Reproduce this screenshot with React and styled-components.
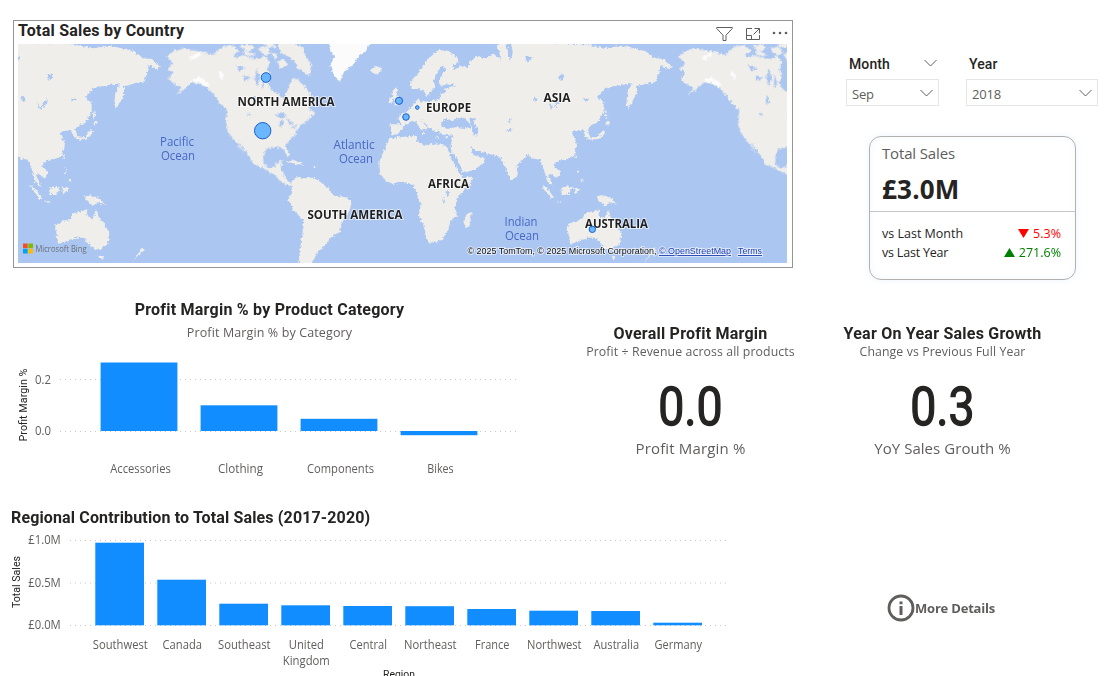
import React from 'react';
import styled, { createGlobalStyle } from 'styled-components';

const SANS = '"Open Sans", "Noto Sans", sans-serif';
const DIN = 'Roboto, "Liberation Sans", sans-serif';

const GlobalStyle = createGlobalStyle`
  * { box-sizing: border-box; }
  body { margin: 0; background: #fff; font-family: ${SANS}; color: #252423; overflow: hidden; }
  svg { display: block; }
`;

const Page = styled.main`
  width: 1118px;
  height: 676px;
  overflow: hidden;
  display: flex;
  flex-direction: column;
  background: #fff;
`;
const Row = styled.section`
  display: flex;
  flex: none;
  height: ${(p) => p.$height}px;
  padding-left: ${(p) => p.$left || 0}px;
`;

/* Map visual */
const MapCard = styled.article`
  width: 780px;
  height: 248px;
  margin: 20px 0 0 13px;
  padding: 0 4px;
  border: 1px solid #979593;
  flex: none;
`;
const MapHeader = styled.header`
  height: 23px;
  display: flex;
  justify-content: space-between;
`;
const HeaderTools = styled.div`
  display: flex;
  align-items: center;
  padding-top: 3px;
  margin-right: -1px;
  gap: 11.5px;
`;
const Title = styled.h2`
  margin: 0;
  font: 700 16px/20px ${DIN};
  letter-spacing: ${(p) => p.$track ?? 0.23}px;
  white-space: nowrap;
  text-align: ${(p) => p.$align || 'left'};
`;
const Subtitle = styled.p`
  margin: ${(p) => p.$lift || 0}px 0 0;
  font: 400 ${(p) => p.$size || 12}px/${(p) => p.$line || 16}px ${SANS};
  letter-spacing: ${(p) => p.$track || 0}px;
  color: #605e5c;
  text-align: center;
  white-space: nowrap;
`;

/* Filters and summary */
const Side = styled.aside`
  padding: 55px 0 0 53px;
  width: 325px;
`;
const Filters = styled.div`
  display: flex;
  gap: 27px;
`;
const Slicer = styled.div`
  width: ${(p) => p.$width}px;
`;
const SlicerHead = styled.div`
  display: flex;
  justify-content: space-between;
  height: 24px;
  padding: 0 2px 0 3px;
  font: 500 14px/19px ${DIN};
  letter-spacing: 0.1px;
`;
const Select = styled.div`
  height: 27px;
  border: 1px solid #e6e6e6;
  display: flex;
  align-items: center;
  justify-content: space-between;
  padding: 2px 5px 0;
  font-size: 13px;
  line-height: 24px;
  letter-spacing: -0.2px;
  color: #605e5c;
`;
const Summary = styled.article`
  width: 207px;
  height: 144px;
  margin: 30px 0 0 23px;
  border: 1px solid #b3b0ad;
  border-radius: 12px;
  box-shadow: 0 0 10px #eef5ff, inset 0 0 9px #f3f8ff;
`;
const SummaryTop = styled.div`
  height: 75px;
  padding: 6px 12px 0;
  border-bottom: 1px solid #c8c6c4;
`;
const SummaryLabel = styled.div`
  font-size: 15px;
  line-height: 20px;
  letter-spacing: -0.15px;
  color: #605e5c;
`;
const SummaryValue = styled.div`
  margin-top: 13px;
  font-size: 26px;
  font-weight: 700;
  line-height: 26px;
  letter-spacing: 0.2px;
`;
const Compare = styled.div`
  padding: 12px 14px 0 12px;
`;
const CompareRow = styled.div`
  display: flex;
  justify-content: space-between;
  font-size: 12.5px;
  line-height: 19px;
  letter-spacing: ${(p) => p.$track}px;
`;
const Delta = styled.span`
  display: flex;
  align-items: center;
  gap: 4px;
  letter-spacing: 0;
  color: ${(p) => (p.$up ? '#008000' : '#ff0000')};
`;

/* Charts and figures */
const CategoryPanel = styled.article`
  width: 529px;
  padding-top: 31px;
`;
const ChartHeading = styled.header`
  width: 517px;
  height: 51px;
  padding-top: 1px;
`;
const Kpi = styled.article`
  width: ${(p) => p.$width}px;
  padding-top: 56px;
  display: flex;
  flex-direction: column;
  align-items: center;
`;
const KpiValue = styled.div`
  font: 400 54px/60px ${DIN};
  margin-top: 17px;
  transform: scaleX(0.86);
  -webkit-text-stroke: 1.3px #252423;
`;
const RegionPanel = styled.article`
  width: 740px;
`;
const Details = styled.a`
  display: flex;
  align-items: center;
  height: 28px;
  margin: 86px 0 0 136px;
  color: #605e5c;
  font: 700 13px/20px ${SANS};
  letter-spacing: -0.2px;
`;

const Chevron = ({ w = 13 }) => (
  <svg width={w} height="18" viewBox={`0 0 ${w} 18`} fill="none" stroke="#605e5c">
    <path d={`M.5 5 L${w / 2} 11 L${w - 0.5} 5`} />
  </svg>
);

const FitLabel = ({ x, y, w, children, size = 12, fill = '#605e5c', anchor = 'middle', font = SANS, weight = 400, ...rest }) => (
  <text x={x} y={y} textLength={w} lengthAdjust="spacingAndGlyphs" fontFamily={font} fontSize={size} fontWeight={weight} fill={fill} textAnchor={anchor} {...rest}>
    {children}
  </text>
);

const EURASIA = `M358 328 L395 328 385 310 392 298 410 290 425 275 438 258 446 250 452 260 480 258 508 252 512 236 528 234 524 222 560 210 545 206 512 212 506 198 520 175 528 162 515 152 500 175 490 195 495 212 482 230 470 244 462 225 445 222 425 222 420 200 440 180 460 150 480 125 510 105 540 110 562 128 565 145 548 148 552 165 575 150 590 160 600 140 615 125 650 130 670 118 690 128 695 150 688 110 682 88 708 82 720 140 728 110 722 80
 L946 88 1006 100 1056 92 1126 108 1156 130 1182 132 1206 155 1196 163 1172 150 1168 175 1156 200 1126 208 1098 213 1100 235 1076 280 1068 270 1072 235 1086 205 1056 210 1006 218 981 250 1001 260 1001 290 981 325 961 330 951 345 963 370 948 366 938 345 906 350 921 390 911 425 861 440 851 452 871 470 862 490 838 475 834 480 850 515 834 505 822 465 812 435 786 430 774 416 740 455 743 480 725 500 705 455 690 425 650 415 618 408 600 394 612 420 645 432 640 445 610 465 577 475 552 430 542 400 548 362 512 358 508 345 498 350 484 345 465 325 450 312 474 340 455 348 438 320 425 318 405 330 388 352 365 362Z`;
const AFRICA = `M358 372 L400 365 440 362 442 380 465 390 500 385 530 395 545 430 565 470 577 487 608 485 600 510 565 545 555 575 562 600 540 620 535 645 515 675 480 686 470 670 460 630 445 600 452 570 440 535 430 510 400 500 370 508 350 500 330 475 328 440 345 400Z M605 590 L600 630 588 640 580 620 588 600Z`;
const SOUTH_AMERICA = `M65 495 L85 485 105 490 130 488 150 500 175 520 190 540 230 548 246 565 235 595 215 620 210 650 185 665 165 690 150 705 130 735 118 760 85 760 90 700 98 650 100 615 70 585 53 552 66 535Z`;
const NORTH_AMERICA = `M470 125 L490 108 520 100 545 106 580 110 610 122 635 108 655 114 680 126 700 120 720 128 745 132 765 122 780 142 772 165 780 178 772 205 785 226 808 238 822 252 830 230 838 215 846 190 862 192 880 210 895 225 905 245 916 262 895 280 915 292 900 310 880 326 865 340 855 360 837 375 827 395 840 420 832 423 820 400 795 397 770 400 760 420 760 445 775 460 795 453 802 440 818 437 811 460 820 475 827 490 840 505 857 508 850 514 830 510 812 498 795 480 760 460 730 447 718 425 700 400 684 375 698 408 704 420 688 395 668 370 652 345 648 310 652 285 630 265 612 240 592 218 570 207 545 202 520 225 495 242 516 218 490 205 474 190 490 172 472 162 490 145Z`;
const ARCTIC = `M605 120 L640 95 665 90 690 108 665 122 640 112Z M690 92 L720 88 735 98 712 112Z M745 100 L770 95 785 115 762 120Z M800 82 L850 82 878 98 885 120 905 150 898 185 880 170 862 160 855 140 835 125 815 115Z M760 82 L790 84 800 98 775 96Z M800 140 L822 132 835 150 812 160Z M700 108 L722 112 738 120 722 124 702 118Z M786 118 L796 112 802 126 792 134Z`;
const GREENLAND = `M175 60 L180 105 195 125 180 150 192 185 210 200 222 170 250 150 265 125 290 105 300 85 290 60Z`;
const SMALL_ISLANDS = `M303 163 L318 153 336 160 334 170 318 178 304 172Z M375 275 L390 268 388 250 378 235 384 220 370 222 366 240 372 252Z M355 265 L368 262 370 248 360 246Z M48 440 L70 436 105 450 85 448Z M130 452 L145 456 132 460Z M457 350 L465 352 460 360Z M525 367 L538 366 532 371Z M495 364 L510 368 498 370Z`;
const OCEANIA = `M135 632 L155 620 178 612 190 595 210 590 232 583 230 602 248 610 258 582 268 608 285 630 298 655 294 685 272 704 250 702 232 680 222 668 200 668 175 676 145 688 140 660Z
 M268 722 L282 724 275 735Z M395 698 L405 705 385 720 365 745 385 715Z M222 545 L240 540 270 550 285 570 262 562 250 572 232 560Z M118 520 L135 512 150 518 140 540 118 540Z M60 510 L75 520 98 550 90 552 65 522Z M100 556 L125 560 112 563Z M155 515 L175 522 160 538Z M165 455 L170 470 165 478Z M178 490 L185 498 176 502Z M160 420 L166 425 161 433Z M190 370 L225 366 242 345 250 350 235 370 210 374Z M250 320 L265 322 252 332Z M252 285 L256 300 250 312 248 300Z`;
const LAKES = `M575 305 L592 318 608 335 590 340 560 336 530 342 512 330 525 310 545 318Z M598 312 L615 308 612 325 625 345 622 362 608 358 606 338Z M535 398 L560 430 578 468 570 470 545 432Z M525 530 L540 528 534 545Z M520 545 L526 565 520 566Z M706 345 L728 340 722 350Z M715 315 L722 312 718 326Z M770 122 L788 128 775 142 765 135Z M866 176 L884 180 876 198 868 190Z M794 242 L803 256 795 262 790 250Z M838 262 L848 278 866 252 872 256 858 276 842 284Z M940 250 L960 252 943 258Z`;
const NA_LAKES = `M794 300 L815 292 832 305 815 310Z M812 315 L820 318 815 340 808 330Z M830 310 L848 322 840 332Z M840 340 L862 328 856 338Z M715 292 L722 298 714 304Z M735 240 L742 262 734 270 730 250Z M700 180 L722 188 705 198Z M678 150 L705 158 688 168Z M740 160 L750 188 742 215 732 188Z M757 178 L765 205 756 220Z`;

function World({ id }) {
  return (
    <g id={id}>
      <g transform="translate(780 0)" fill="#efeeea">
        <path d={EURASIA} /><path d={AFRICA} /><path d={SOUTH_AMERICA} />
        <path d={SMALL_ISLANDS} /><path d={GREENLAND} fill="#fbfbfb" />
        <path d={LAKES} fill="#abc6f1" />
      </g>
      <path d={NORTH_AMERICA} fill="#efeeea" />
      <path d={ARCTIC} fill="#efeeea" />
      <path d={OCEANIA} fill="#efeeea" transform="translate(1536 0)" />
      <path d="M535 130 L570 110 568 124 548 134Z M540 200 L568 185 600 210 590 215 568 202Z M628 165 L642 180 638 195 628 185Z" fill="#fdfdfd" />
    </g>
  );
}

const OCEAN = '#4868c4';
const halo = { paintOrder: 'stroke', stroke: '#ffffff', strokeOpacity: 0.6, strokeWidth: 2 };

function MapView() {
  const place = { size: 12, fill: '#1f1f1f', weight: 700, ...halo };
  const ocean = { size: 12, fill: OCEAN };
  const credit = { size: 9, fill: '#111', font: '"Liberation Sans", sans-serif', anchor: 'start', ...halo };
  return (
    <svg width="769" height="219" viewBox="18 44 769 219">
      <defs>
        <filter id="coast" filterUnits="userSpaceOnUse" x="0" y="60" width="2500" height="720">
          <feTurbulence type="fractalNoise" baseFrequency="0.13" numOctaves="2" seed="4" result="n" />
          <feDisplacementMap in="SourceGraphic" in2="n" scale="14" xChannelSelector="R" yChannelSelector="G" />
        </filter>
      </defs>
      <rect x="18" y="44" width="769" height="219" fill="#abc6f1" />
      <g transform="translate(10 15) scale(.33333)" filter="url(#coast)">
        <World id="world" />
        <use href="#world" x="-1536" />
        <use href="#world" x="1536" />
        <path d={NA_LAKES} fill="#abc6f1" />
        <path d={NA_LAKES} fill="#abc6f1" transform="translate(1536 0)" />
      </g>
      <FitLabel x="286" y="106" w="97" {...place}>NORTH AMERICA</FitLabel>
      <FitLabel x="355" y="219" w="95" {...place}>SOUTH AMERICA</FitLabel>
      <FitLabel x="448.500" y="187.500" w="41" {...place}>AFRICA</FitLabel>
      <FitLabel x="448.500" y="112" w="45" {...place}>EUROPE</FitLabel>
      <FitLabel x="557" y="102" w="27" {...place}>ASIA</FitLabel>
      <FitLabel x="616.500" y="228" w="63" {...place}>AUSTRALIA</FitLabel>
      <FitLabel x="177" y="146" w="34" {...ocean}>Pacific</FitLabel>
      <FitLabel x="178" y="160" w="34" {...ocean}>Ocean</FitLabel>
      <FitLabel x="354" y="149" w="41" {...ocean}>Atlantic</FitLabel>
      <FitLabel x="356" y="163" w="34" {...ocean}>Ocean</FitLabel>
      <FitLabel x="521" y="225.500" w="33" {...ocean}>Indian</FitLabel>
      <FitLabel x="522" y="239.500" w="34" {...ocean}>Ocean</FitLabel>
      <g fill="#5bb0ff" fillOpacity=".9" stroke="#1a5fd0">
        <circle cx="266" cy="77.500" r="4.800" />
        <circle cx="262.700" cy="130.700" r="8.200" />
        <circle cx="399" cy="100.800" r="3.600" />
        <circle cx="406" cy="117" r="3.300" />
        <circle cx="417.300" cy="107.500" r="1.800" />
        <circle cx="592.300" cy="229.300" r="3.200" />
      </g>
      <path d="M23 243.500h4.700v4.700H23z" fill="#f25022" />
      <path d="M28.300 243.500H33v4.700h-4.700z" fill="#7fba00" />
      <path d="M23 248.800h4.700v4.700H23z" fill="#00a4ef" />
      <path d="M28.300 248.800H33v4.700h-4.700z" fill="#ffb900" />
      <FitLabel x="35.500" y="251.500" w="51" size={9} anchor="start" fill="#6b6f76">Microsoft Bing</FitLabel>
      <FitLabel x="467.500" y="254" w="189" {...credit}>© 2025 TomTom, © 2025 Microsoft Corporation,</FitLabel>
      <FitLabel x="659" y="254" w="72" {...credit} fill="#1f3fb0" textDecoration="underline">© OpenStreetMap</FitLabel>
      <FitLabel x="738" y="254" w="24" {...credit} fill="#1f3fb0" textDecoration="underline">Terms</FitLabel>
    </svg>
  );
}

function GridLines({ ys, x1, x2 }) {
  return ys.map((y) => <line key={y} x1={x1} x2={x2} y1={y} y2={y} stroke="#c8c8c8" strokeDasharray="1 4" />);
}

const categories = [
  { name: 'Accessories', w: 60.5, top: 362.5, h: 68.5 },
  { name: 'Clothing', w: 45, top: 405.3, h: 25.7 },
  { name: 'Components', w: 67, top: 418.8, h: 12.2 },
  { name: 'Bikes', w: 26.5, top: 431, h: 4.2 },
];

function CategoryChart() {
  return (
    <svg width="520" height="140" viewBox="11 350 520 140">
      <GridLines ys={[379.5, 431.5]} x1={60} x2={520} />
      {categories.map((c, i) => (
        <g key={c.name}>
          <rect x={100.6 + i * 100} y={c.top} width="76.800" height={c.h} fill="#118dff" />
          <FitLabel x={140.500 + i * 100} y="473" w={c.w}>{c.name}</FitLabel>
        </g>
      ))}
      <FitLabel x="43" y="384" w="16">0.2</FitLabel>
      <FitLabel x="43" y="435" w="16">0.0</FitLabel>
      <FitLabel x="0" y="0" w="73" size={10} font={DIN} fill="#252423" transform="translate(27 405) rotate(-90)">Profit Margin %</FitLabel>
    </svg>
  );
}

const regions = [
  { lines: [['Southwest', 55]], top: 542.7 },
  { lines: [['Canada', 39.5]], top: 579.7 },
  { lines: [['Southeast', 52.5]], top: 603.7 },
  { lines: [['United', 35], ['Kingdom', 47]], top: 605.3 },
  { lines: [['Central', 37.5]], top: 606 },
  { lines: [['Northeast', 52.5]], top: 606.2 },
  { lines: [['France', 34.5]], top: 609 },
  { lines: [['Northwest', 54.5]], top: 610.7 },
  { lines: [['Australia', 45.5]], top: 611 },
  { lines: [['Germany', 47.5]], top: 622.7 },
];

function RegionChart() {
  return (
    <svg width="729" height="148" viewBox="11 528 729 148">
      <GridLines ys={[540.5, 583, 625.5]} x1={70} x2={728} />
      {regions.map((r, i) => (
        <g key={r.lines[0][0]}>
          <rect x={95.300 + i * 62} y={r.top} width="48.700" height={625.3 - r.top} fill="#118dff" />
          {r.lines.map(([t, w], j) => (
            <FitLabel key={t} x={120.300 + i * 62} y={649 + j * 16} w={w}>{t}</FitLabel>
          ))}
        </g>
      ))}
      <FitLabel x="44.500" y="544" w="32.500">£1.0M</FitLabel>
      <FitLabel x="44.500" y="587" w="32.500">£0.5M</FitLabel>
      <FitLabel x="44.500" y="629" w="32.500">£0.0M</FitLabel>
      <FitLabel x="0" y="0" w="52" size={10} font={DIN} fill="#252423" transform="translate(20 582) rotate(-90)">Total Sales</FitLabel>
      <FitLabel x="399" y="678" w="32" size={10.5} font={DIN} fill="#252423">Region</FitLabel>
    </svg>
  );
}

export default function App() {
  return (
    <Page>
      <GlobalStyle />
      <Row $height={268}>
        <MapCard>
          <MapHeader>
            <Title>Total Sales by Country</Title>
            <HeaderTools>
              <svg width="17" height="16" viewBox="0 0 17 16" fill="none" stroke="#605e5c"><path d="M.7 1.500h15.600v1L10 9.200v5.300H7V9.200L.7 2.500z" /></svg>
              <svg width="16" height="16" viewBox="0 0 16 16" fill="none" stroke="#605e5c"><path d="M7 2.500H1.500v11h13V9M1.500 9.500h5v4M9.500 2.500h5v5M14.500 2.500l-6 6" /></svg>
              <svg width="17" height="16" viewBox="0 0 17 16" fill="#605e5c"><circle cx="2" cy="7" r="1.300" /><circle cx="8" cy="7" r="1.300" /><circle cx="14" cy="7" r="1.300" /></svg>
            </HeaderTools>
          </MapHeader>
          <MapView />
        </MapCard>
        <Side>
          <Filters>
            <Slicer $width={93}>
              <SlicerHead><span>Month</span><Chevron /></SlicerHead>
              <Select><span>Sep</span><Chevron /></Select>
            </Slicer>
            <Slicer $width={132}>
              <SlicerHead><span>Year</span></SlicerHead>
              <Select><span>2018</span><Chevron /></Select>
            </Slicer>
          </Filters>
          <Summary>
            <SummaryTop>
              <SummaryLabel>Total Sales</SummaryLabel>
              <SummaryValue>£3.0M</SummaryValue>
            </SummaryTop>
            <Compare>
              <CompareRow $track={0}>
                <span>vs Last Month</span>
                <Delta><svg width="11" height="9"><path d="M0 0h11L5.500 9z" fill="#f00" /></svg>5.3%</Delta>
              </CompareRow>
              <CompareRow $track={-0.2}>
                <span>vs Last Year</span>
                <Delta $up><svg width="11" height="9"><path d="M0 9h11L5.500 0z" fill="#008000" /></svg>271.6%</Delta>
              </CompareRow>
            </Compare>
          </Summary>
        </Side>
      </Row>
      <Row $height={240} $left={11}>
        <CategoryPanel>
          <ChartHeading>
            <Title $align="center">Profit Margin % by Product Category</Title>
            <Subtitle $line={25} $size={12.5} $track={0.12}>Profit Margin % by Category</Subtitle>
          </ChartHeading>
          <CategoryChart />
        </CategoryPanel>
        <Kpi $width={301}>
          <Title>Overall Profit Margin</Title>
          <Subtitle $size={12.3} $track={0.1}>Profit ÷ Revenue across all products</Subtitle>
          <KpiValue>0.0</KpiValue>
          <Subtitle $size={15} $line={24} $track={0.15} $lift={-1}>Profit Margin %</Subtitle>
        </Kpi>
        <Kpi $width={203}>
          <Title>Year On Year Sales Growth</Title>
          <Subtitle $size={12.3} $track={0.1}>Change vs Previous Full Year</Subtitle>
          <KpiValue>0.3</KpiValue>
          <Subtitle $size={15} $line={24} $track={0.05} $lift={-1}>YoY Sales Grouth %</Subtitle>
        </Kpi>
      </Row>
      <Row $height={168} $left={11}>
        <RegionPanel>
          <Title $track={0.14}>Regional Contribution to Total Sales (2017-2020)</Title>
          <RegionChart />
        </RegionPanel>
        <Details>
          <svg width="28" height="28" viewBox="0 0 28 28" fill="#605e5c"><circle cx="14" cy="14" r="12" fill="none" stroke="#605e5c" strokeWidth="2.800" /><path d="M12.500 7.500h3v2.700h-3zM12.500 12h3v9h-3z" /></svg>
          <span>More Details</span>
        </Details>
      </Row>
    </Page>
  );
}
